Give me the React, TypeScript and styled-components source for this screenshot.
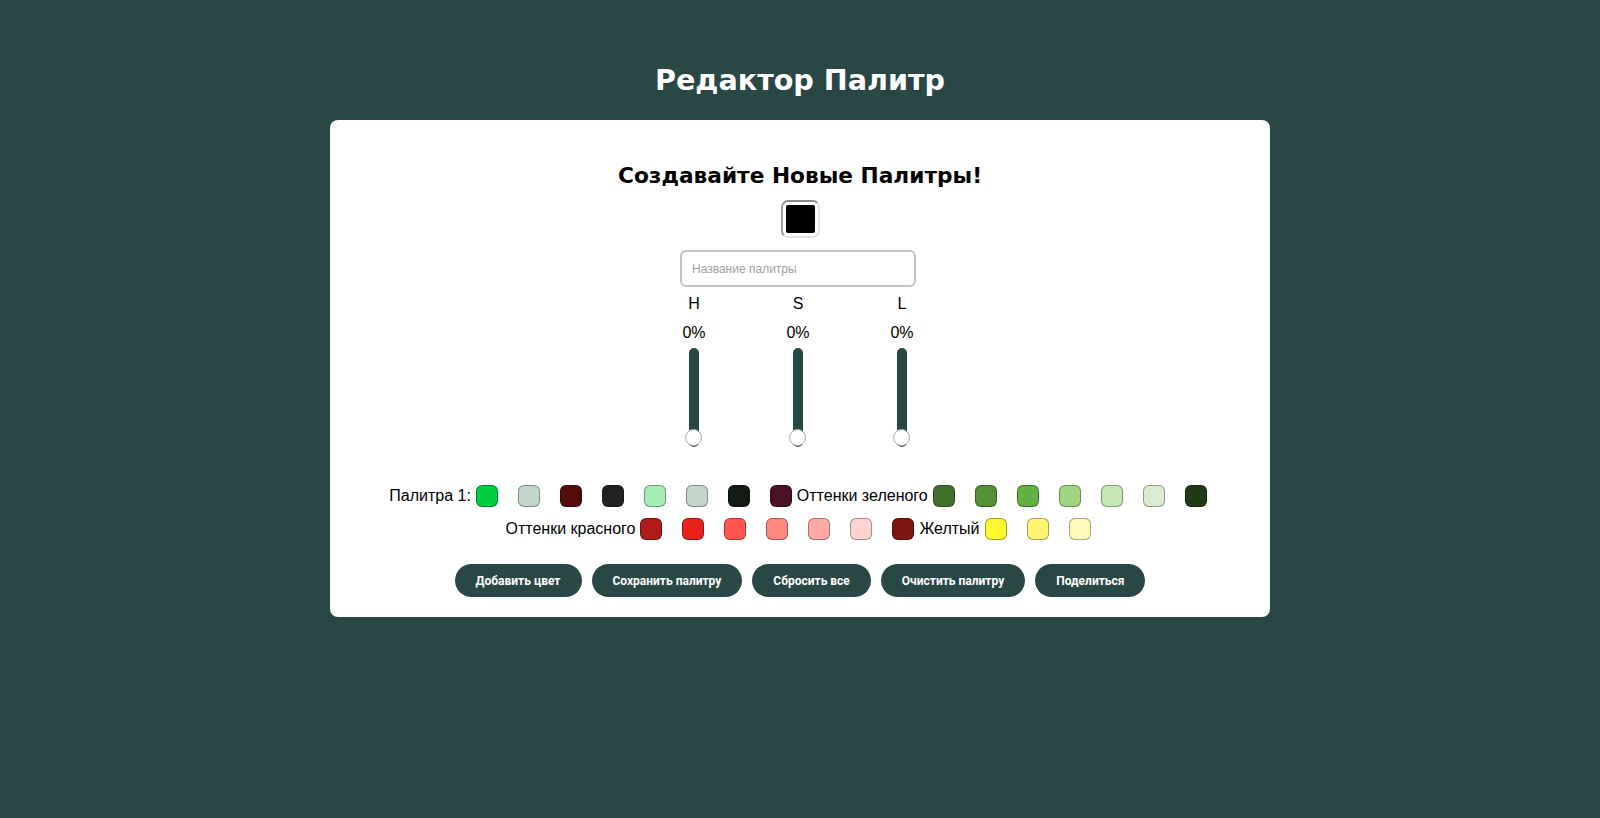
import React, { useState } from 'react'
import styled, { createGlobalStyle } from 'styled-components'

const GlobalStyle = createGlobalStyle`
  html, body {
    margin: 0;
    padding: 0;
    background: #284745;
  }
  body {
    font-family: "Liberation Sans", Arial, sans-serif;
  }
  * {
    box-sizing: border-box;
  }
`

interface palette {
  name: string,
  colors: Array<string>
}

const palettes: Array<palette> = [
  { name: 'Палитра 1:', colors: ['#00cf46', '#c1d6c8', '#520c0c', '#222222', '#a6ecb5', '#c3d6c9', '#121a14', '#4b1226'] },
  { name: 'Оттенки зеленого', colors: ['#426e2d', '#558f38', '#64b043', '#a0d586', '#c4e7b4', '#d9ebd0', '#213a16'] },
  { name: 'Оттенки красного', colors: ['#b01b18', '#e8211b', '#ff554e', '#ff8780', '#ffaaa5', '#ffd3d1', '#7d1510'] },
  { name: 'Желтый', colors: ['#fff831', '#fff571', '#fffab9'] },
]

const buttons = ['Добавить цвет', 'Сохранить палитру', 'Сбросить все', 'Очистить палитру', 'Поделиться']

const App = () => {
  const [name, setName] = useState('')
  const [hsl] = useState({ H: 0, S: 0, L: 0 })

  return (
    <Page>
      <GlobalStyle />
      <PageTitle>Редактор Палитр</PageTitle>
      <Card>
        <CardTitle>Создавайте Новые Палитры!</CardTitle>
        <ColorWell>
          <ColorFill $color="#000000" />
        </ColorWell>
        <NameInput
          type="text"
          value={name}
          placeholder="Название палитры"
          onChange={(evt: React.ChangeEvent<HTMLInputElement>) => setName(evt.target.value)}
        />
        <Sliders>
          {(Object.keys(hsl) as Array<'H' | 'S' | 'L'>).map((key) =>
            <SliderColumn key={key}>
              <SliderLabel>{key}</SliderLabel>
              <SliderValue>{hsl[key]}%</SliderValue>
              <Track>
                <Thumb style={{ bottom: `${1 + hsl[key] * 0.8}px` }} />
              </Track>
            </SliderColumn>
          )}
        </Sliders>
        <PaletteList>
          {palettes.map((p) =>
            <PaletteGroup key={p.name}>
              <PaletteName>{p.name}</PaletteName>
              <Swatches>
                {p.colors.map((c, idx) => <Swatch key={idx} $color={c} />)}
              </Swatches>
            </PaletteGroup>
          )}
        </PaletteList>
        <Actions>
          {buttons.map((b) => <ActionButton key={b}>{b}</ActionButton>)}
        </Actions>
      </Card>
    </Page>
  )
}

const Page = styled.div`
  min-height: 100vh;
  padding: 58px 0 40px;
  background: #284745;
`
const PageTitle = styled.h1`
  margin: 0 0 18px;
  text-align: center;
  color: #ffffff;
  font-family: "DejaVu Sans", Verdana, sans-serif;
  font-weight: bold;
  font-size: 28.6px;
  line-height: 44px;
`
const Card = styled.div`
  width: 940px;
  margin: 0 auto;
  background: #ffffff;
  border-radius: 8px;
  padding: 40px 0 20px;
  display: flex;
  flex-direction: column;
  align-items: center;
`
const CardTitle = styled.h2`
  margin: 0;
  font-family: "DejaVu Sans", Verdana, sans-serif;
  font-weight: bold;
  font-size: 21.7px;
  line-height: 32px;
  color: #000000;
`
const ColorWell = styled.div`
  margin-top: 8px;
  width: 39px;
  height: 38px;
  padding: 3px;
  border-radius: 7px;
  border: 2px solid #e2e2e2;
  border-top-color: #8c8c8c;
  border-left-color: #9a9a9a;
  background: #ffffff;
`
const ColorFill = styled.div<{ $color: string }>`
  width: 100%;
  height: 100%;
  border-radius: 2px;
  background: ${(p) => p.$color};
`
const NameInput = styled.input`
  margin: 12px 4px 0 0;
  width: 236px;
  height: 37px;
  padding: 0 10px;
  border: 2px solid #c4c4c4;
  border-radius: 6px;
  font-family: "Liberation Sans", Arial, sans-serif;
  font-size: 12px;
  color: #333;
  outline: none;
  &::placeholder {
    color: #a0a0a0;
  }
`
const Sliders = styled.div`
  margin: 8px 4px 0 0;
  display: grid;
  grid-template-columns: repeat(3, 104px);
  justify-items: center;
`
const SliderColumn = styled.div`
  display: flex;
  flex-direction: column;
  align-items: center;
`
const SliderLabel = styled.div`
  font-size: 16px;
  line-height: 18px;
  color: #000;
`
const SliderValue = styled.div`
  margin-top: 11px;
  font-size: 16px;
  line-height: 18px;
  color: #000;
`
const Track = styled.div`
  position: relative;
  margin-top: 6px;
  width: 10px;
  height: 99px;
  border-radius: 5px;
  background: #284745;
`
const Thumb = styled.div`
  position: absolute;
  left: 50%;
  width: 17px;
  height: 17px;
  margin-left: -8.5px;
  border-radius: 50%;
  background: #ffffff;
  border: 1px solid #a8a8a8;
`
const PaletteList = styled.div`
  margin: 38px 4px 0 0;
  width: 880px;
  display: flex;
  flex-wrap: wrap;
  justify-content: center;
  column-gap: 5px;
  row-gap: 11px;
`
const PaletteGroup = styled.div`
  display: flex;
  align-items: center;
  gap: 5px;
  height: 22px;
`
const PaletteName = styled.span`
  font-size: 16px;
  line-height: 18px;
  color: #000;
  white-space: nowrap;
`
const Swatches = styled.div`
  display: flex;
  gap: 20px;
`
const Swatch = styled.div<{ $color: string }>`
  width: 22px;
  height: 22px;
  border-radius: 6px;
  border: 1px solid rgba(0, 0, 0, 0.35);
  background: ${(p) => p.$color};
`
const Actions = styled.div`
  margin-top: 24px;
  display: flex;
  justify-content: center;
  gap: 10px;
`
const ActionButton = styled.button`
  height: 33px;
  padding: 0 21px;
  border: none;
  border-radius: 17px;
  background: #284745;
  color: #ffffff;
  font-family: Roboto, "Liberation Sans", sans-serif;
  font-weight: bold;
  font-size: 12px;
  cursor: pointer;
`

export default App
